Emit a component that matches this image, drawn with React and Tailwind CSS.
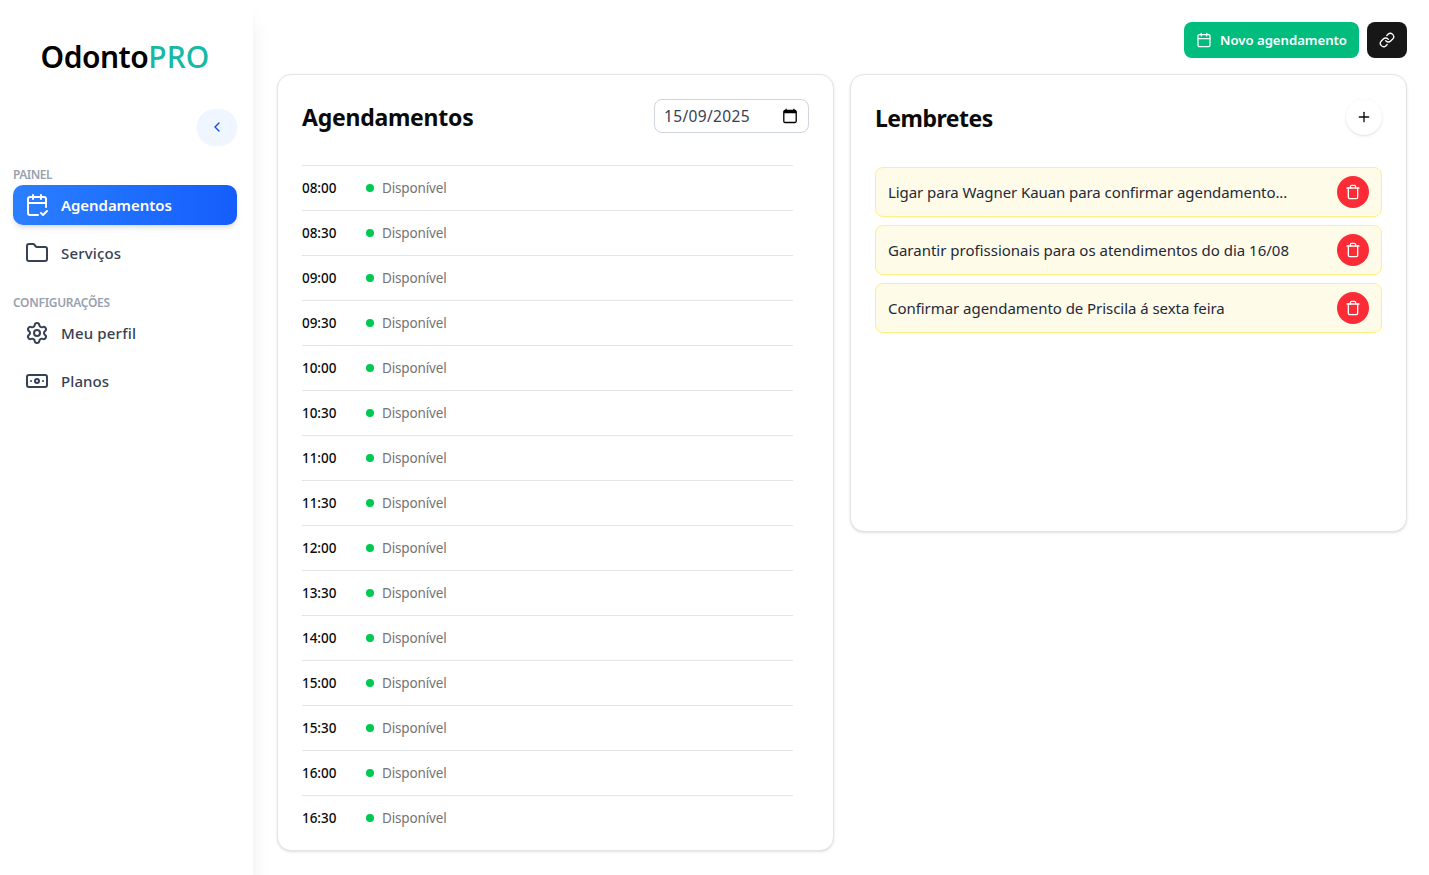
import {
  CalendarCheck2,
  Folder,
  Settings,
  Banknote,
  ChevronLeft,
  Calendar,
  Link,
  Plus,
  Trash,
} from "lucide-react";

const times = [
  "08:00", "08:30", "09:00", "09:30", "10:00", "10:30", "11:00", "11:30",
  "12:00", "13:30", "14:00", "15:00", "15:30", "16:00", "16:30",
];

const reminders = [
  { text: "Ligar para Wagner Kauan para confirmar agendamento...", spacing: "tracking-[-0.08px]" },
  { text: "Garantir profissionais para os atendimentos do dia 16/08", spacing: "tracking-normal" },
  { text: "Confirmar agendamento de Priscila á sexta feira", spacing: "tracking-[-0.05px]" },
];

function NavItem({ icon: Icon, label, spacing, active }) {
  return (
    <a
      className={
        active
          ? "flex h-10 items-center gap-3 rounded-[10px] bg-linear-to-r from-[#2b7fff] to-[#155dfc] px-3 text-white shadow-md"
          : "flex h-10 items-center gap-3 rounded-[10px] px-3 text-[#364153]"
      }
    >
      <Icon className="size-6 shrink-0" />
      <span className={`pt-px text-[15px] whitespace-nowrap ${active ? "font-semibold" : "font-medium"} ${spacing}`}>{label}</span>
    </a>
  );
}

function Sidebar() {
  return (
    <aside className="flex h-[875px] w-[253px] shrink-0 flex-col bg-white pr-4 pl-[13px] shadow-xl">
      <div className="flex h-[109px] items-start justify-center pt-[35px] text-[30px] leading-[44px] font-semibold whitespace-nowrap text-black">
        <span className="tracking-[-0.5px]">Odonto</span>
        <span className="font-medium text-[#16b8a6] tracking-[0.1px]">PRO</span>
      </div>
      <button className="flex h-9 w-10 items-center justify-center self-end rounded-full bg-[#eff6ff] text-[#1447e6] shadow-xs">
        <ChevronLeft className="size-4" />
      </button>
      <nav className="flex flex-col pt-5">
        <span className="h-5 text-xs leading-[19px] font-semibold text-[#99a1af] tracking-[-0.5px]">PAINEL</span>
        <div className="flex flex-col gap-2">
          <NavItem icon={CalendarCheck2} label="Agendamentos" spacing="tracking-[-0.06px]" active />
          <NavItem icon={Folder} label="Serviços" spacing="tracking-[0.15px]" />
        </div>
        <span className="mt-5 h-5 text-xs leading-[19px] font-semibold text-[#99a1af] tracking-[-0.3px]">CONFIGURAÇÕES</span>
        <div className="flex flex-col gap-2">
          <NavItem icon={Settings} label="Meu perfil" spacing="tracking-[0.17px]" />
          <NavItem icon={Banknote} label="Planos" spacing="tracking-[0.1px]" />
        </div>
      </nav>
    </aside>
  );
}

function DateIcon() {
  return (
    <svg className="h-4 w-[14px]" viewBox="0 0 14 16" aria-hidden="true">
      <path d="M2 2.500h10a1.200 1.200 0 0 1 1.200 1.200v9.600a1.200 1.200 0 0 1-1.200 1.200H2a1.200 1.200 0 0 1-1.200-1.200V3.700A1.200 1.200 0 0 1 2 2.500z" fill="none" stroke="#000" strokeWidth="1.300" />
      <path d="M1 2h12v3.200H1zM2.500 .8h1.300v2H2.500zM10.200 .8h1.300v2h-1.300z" fill="#000" />
    </svg>
  );
}

export default function App() {
  return (
    <div className="flex h-[875px] w-[1429px] overflow-hidden bg-white font-['Noto_Sans',sans-serif] text-[#0a0a0a]">
      <div className="z-10 flex">
        <Sidebar />
      </div>
      <main className="flex w-[1154px] flex-col pt-[22px] pl-6">
        <div className="flex h-9 justify-end gap-2">
          <button className="flex h-9 w-[175px] items-center gap-2 rounded-lg bg-[#00bc7d] px-3 text-[13.2px] font-semibold whitespace-nowrap text-white">
            <Calendar className="size-4 shrink-0" strokeWidth={1.8} />
            <span className="pt-px tracking-[-0.03px]">Novo agendamento</span>
          </button>
          <button className="flex h-9 w-10 items-center justify-center rounded-lg bg-[#171717] text-white">
            <Link className="size-4" />
          </button>
        </div>
        <div className="mt-4 flex items-start gap-4">
          <section className="h-[777px] w-[557px] rounded-[14px] border border-[#e5e5e5] bg-white px-6 pt-6 shadow-sm">
            <div className="flex h-[66px] items-start justify-between">
              <h2 className="text-[23px] leading-9 font-bold tracking-[-0.25px]">Agendamentos</h2>
              <div className="flex h-[34px] w-[155px] items-center justify-between rounded-lg border border-[#d1d5dc] pr-[11px] pl-[9px] text-[#364153]">
                <span className="pt-px text-[15.5px] tracking-[0.35px]">15/09/2025</span>
                <DateIcon />
              </div>
            </div>
            <ul className="w-[491px]">
              {times.map((time) => (
                <li key={time} className="flex h-[45px] items-center border-t border-[#e5e5e5] text-[13.5px]">
                  <span className="w-16 font-medium tracking-[-0.05px]">{time}</span>
                  <span className="mr-2 size-2 rounded-full bg-[#00c950]" />
                  <span className="text-[#737373] tracking-[-0.15px]">Disponível</span>
                </li>
              ))}
            </ul>
          </section>
          <section className="h-[458px] w-[557px] rounded-[14px] border border-[#e5e5e5] bg-white px-6 pt-6 shadow-sm">
            <div className="flex h-[68px] items-start justify-between">
              <h2 className="pt-px text-[23px] leading-9 font-bold tracking-[-0.5px]">Lembretes</h2>
              <button className="flex size-9 items-center justify-center rounded-full bg-white shadow-sm">
                <Plus className="size-4" />
              </button>
            </div>
            <ul className="flex flex-col gap-2">
              {reminders.map((item) => (
                <li key={item.text} className="flex h-[50px] items-center justify-between rounded-lg border border-[#fff085] bg-[#fefce8] px-3">
                  <span className={`pt-px text-[15px] whitespace-nowrap text-[#1e2939] ${item.spacing}`}>{item.text}</span>
                  <button className="flex size-8 shrink-0 items-center justify-center rounded-full bg-[#fb2c36] text-white">
                    <Trash className="size-4" />
                  </button>
                </li>
              ))}
            </ul>
          </section>
        </div>
      </main>
    </div>
  );
}
